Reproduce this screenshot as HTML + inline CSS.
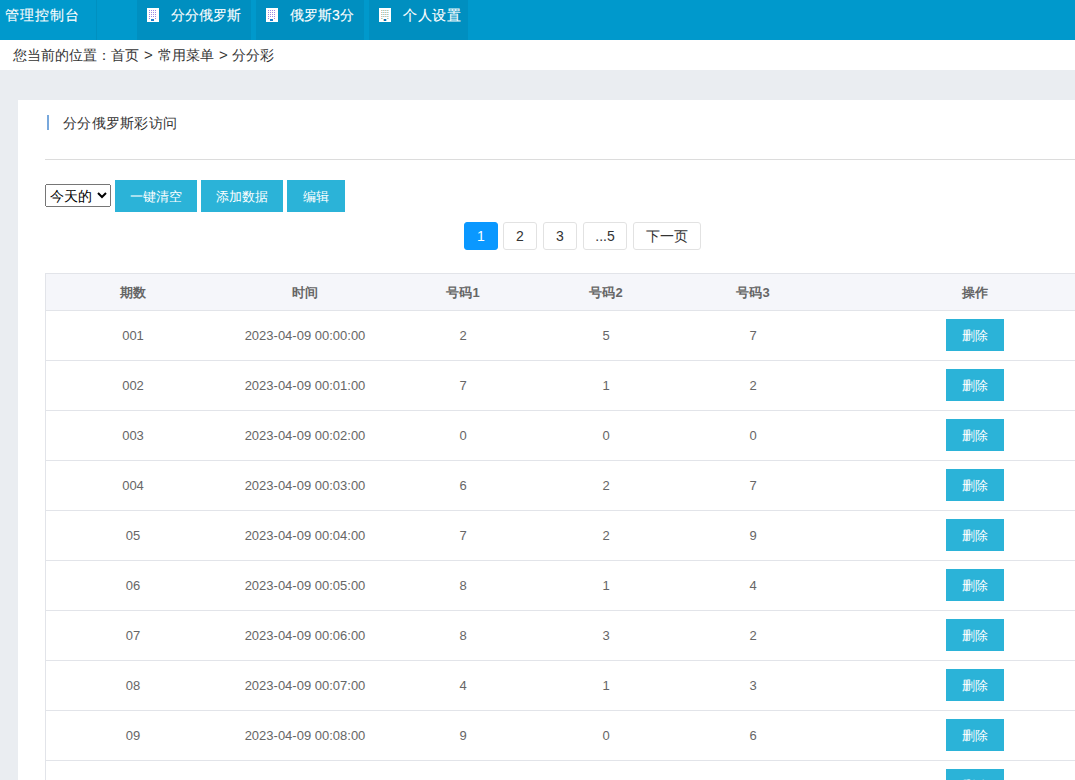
<!DOCTYPE html>
<html>
<head>
<meta charset="utf-8">
<style>
*{box-sizing:border-box;}
html,body{margin:0;padding:0;}
body{width:1075px;height:780px;overflow:hidden;position:relative;background:#eaedf1;font-family:"Liberation Sans",sans-serif;color:#333;}
.hdr{position:absolute;left:0;top:0;width:1075px;height:40px;background:#0099cc;}
.logo{position:absolute;left:5px;top:0;height:40px;line-height:30px;font-size:14px;letter-spacing:1px;color:#fff;-webkit-text-stroke:0.1px #fff;}
.vline{position:absolute;left:96px;top:0;width:1px;height:40px;background:#0090c0;}
.tab{position:absolute;top:0;height:40px;background:#008fc0;color:#fff;font-size:14px;line-height:30px;}
.tab .ic{position:absolute;left:10px;top:8px;width:12px;height:14px;display:block;}
.tab .tx{position:absolute;left:34px;top:0;white-space:nowrap;-webkit-text-stroke:0.1px #fff;}
.crumb{position:absolute;left:0;top:40px;width:1075px;height:30px;background:#fff;font-size:14px;line-height:30px;color:#333;}
.crumb .t{position:absolute;left:13px;top:0;white-space:nowrap;}
.crumb .gt{font-size:15px;}
.panel{position:absolute;left:18px;top:100px;width:1100px;height:700px;background:#fff;}
.qbar{position:absolute;left:47px;top:115px;width:2px;height:15px;background:#78a8dc;}
.qtitle{position:absolute;left:63px;top:112px;font-size:14px;line-height:22px;letter-spacing:0.25px;color:#333;white-space:nowrap;}
.hr{position:absolute;left:45px;top:159px;width:1040px;height:1px;background:#dcdcdc;}
select{position:absolute;left:45px;top:184px;width:66px;height:23px;font-size:14px;}
.btn{position:absolute;top:180px;height:32px;background:#2bb3d8;color:#fff;font-size:13px;line-height:34px;text-align:center;}
.pg{position:absolute;top:222px;height:28px;border:1px solid #e2e2e2;border-radius:3px;background:#fff;color:#333;font-size:14px;line-height:26px;text-align:center;}
.pg.on{background:#0a98ff;border-color:#0a98ff;color:#fff;}
.tbl{position:absolute;left:45px;top:273px;width:1060px;border-left:1px solid #e2e4e9;border-top:1px solid #e2e4e9;}
.row{position:relative;height:50px;border-bottom:1px solid #e2e4e9;font-size:13px;color:#666;}
.row.h{height:37px;background:#f5f6fa;font-weight:bold;}
.c{position:absolute;top:0;white-space:nowrap;transform:translateX(-50%);}
.row .c{line-height:49px;}
.row.h .c{line-height:36px;top:1px;}
.c1{left:87px}.c2{left:259px}.c3{left:417px}.c4{left:560px}.c5{left:707px}.c6{left:929px}
.del{position:absolute;left:900px;top:8px;width:58px;height:32px;background:#2bb3d8;color:#fff;font-size:12px;line-height:34px;text-align:center;font-weight:normal;font-size:13px;}
</style>
</head>
<body>
<div class="hdr">
  <div class="logo">管理控制台</div>
  <div class="vline"></div>
  <div class="tab" style="left:137px;width:114px"><svg class="ic" width="12" height="14" viewBox="0 0 12 14" shape-rendering="crispEdges"><rect width="12" height="14" fill="#fff"/><rect x="2" y="2" width="1" height="1" fill="#9d8ce6"/><rect x="4" y="2" width="1" height="1" fill="#9d8ce6"/><rect x="6" y="2" width="1" height="1" fill="#9d8ce6"/><rect x="8" y="2" width="1" height="1" fill="#9d8ce6"/><rect x="2" y="4" width="1" height="1" fill="#9d8ce6"/><rect x="4" y="4" width="1" height="1" fill="#9d8ce6"/><rect x="6" y="4" width="1" height="1" fill="#9d8ce6"/><rect x="8" y="4" width="1" height="1" fill="#9d8ce6"/><rect x="2" y="6" width="1" height="1" fill="#9d8ce6"/><rect x="4" y="6" width="1" height="1" fill="#9d8ce6"/><rect x="6" y="6" width="1" height="1" fill="#9d8ce6"/><rect x="8" y="6" width="1" height="1" fill="#9d8ce6"/><rect x="2" y="8" width="1" height="1" fill="#9d8ce6"/><rect x="4" y="8" width="1" height="1" fill="#9d8ce6"/><rect x="6" y="8" width="1" height="1" fill="#9d8ce6"/><rect x="8" y="8" width="1" height="1" fill="#9d8ce6"/><rect x="2" y="10" width="1" height="1" fill="#9d8ce6"/><rect x="8" y="10" width="1" height="1" fill="#9d8ce6"/><rect x="4" y="11" width="3" height="2" fill="#1f7fd0"/></svg><span class="tx">分分俄罗斯</span></div>
  <div class="tab" style="left:256px;width:108px"><svg class="ic" width="12" height="14" viewBox="0 0 12 14" shape-rendering="crispEdges"><rect width="12" height="14" fill="#fff"/><rect x="2" y="2" width="1" height="1" fill="#9d8ce6"/><rect x="4" y="2" width="1" height="1" fill="#9d8ce6"/><rect x="6" y="2" width="1" height="1" fill="#9d8ce6"/><rect x="8" y="2" width="1" height="1" fill="#9d8ce6"/><rect x="2" y="4" width="1" height="1" fill="#9d8ce6"/><rect x="4" y="4" width="1" height="1" fill="#9d8ce6"/><rect x="6" y="4" width="1" height="1" fill="#9d8ce6"/><rect x="8" y="4" width="1" height="1" fill="#9d8ce6"/><rect x="2" y="6" width="1" height="1" fill="#9d8ce6"/><rect x="4" y="6" width="1" height="1" fill="#9d8ce6"/><rect x="6" y="6" width="1" height="1" fill="#9d8ce6"/><rect x="8" y="6" width="1" height="1" fill="#9d8ce6"/><rect x="2" y="8" width="1" height="1" fill="#9d8ce6"/><rect x="4" y="8" width="1" height="1" fill="#9d8ce6"/><rect x="6" y="8" width="1" height="1" fill="#9d8ce6"/><rect x="8" y="8" width="1" height="1" fill="#9d8ce6"/><rect x="2" y="10" width="1" height="1" fill="#9d8ce6"/><rect x="8" y="10" width="1" height="1" fill="#9d8ce6"/><rect x="4" y="11" width="3" height="2" fill="#1f7fd0"/></svg><span class="tx">俄罗斯3分</span></div>
  <div class="tab" style="left:369px;width:99px"><svg class="ic" width="12" height="14" viewBox="0 0 12 14" shape-rendering="crispEdges"><rect width="12" height="14" fill="#fff"/><rect x="2" y="2" width="1" height="1" fill="#d2c0a0"/><rect x="3" y="2" width="1" height="1" fill="#b0eaf4"/><rect x="4" y="2" width="1" height="1" fill="#d2c0a0"/><rect x="5" y="2" width="1" height="1" fill="#b0eaf4"/><rect x="6" y="2" width="1" height="1" fill="#d2c0a0"/><rect x="7" y="2" width="1" height="1" fill="#b0eaf4"/><rect x="8" y="2" width="1" height="1" fill="#d2c0a0"/><rect x="9" y="2" width="1" height="1" fill="#b0eaf4"/><rect x="2" y="4" width="1" height="1" fill="#d2c0a0"/><rect x="3" y="4" width="1" height="1" fill="#b0eaf4"/><rect x="4" y="4" width="1" height="1" fill="#d2c0a0"/><rect x="5" y="4" width="1" height="1" fill="#b0eaf4"/><rect x="6" y="4" width="1" height="1" fill="#d2c0a0"/><rect x="7" y="4" width="1" height="1" fill="#b0eaf4"/><rect x="8" y="4" width="1" height="1" fill="#d2c0a0"/><rect x="9" y="4" width="1" height="1" fill="#b0eaf4"/><rect x="2" y="6" width="1" height="1" fill="#d2c0a0"/><rect x="3" y="6" width="1" height="1" fill="#b0eaf4"/><rect x="4" y="6" width="1" height="1" fill="#d2c0a0"/><rect x="5" y="6" width="1" height="1" fill="#b0eaf4"/><rect x="6" y="6" width="1" height="1" fill="#d2c0a0"/><rect x="7" y="6" width="1" height="1" fill="#b0eaf4"/><rect x="8" y="6" width="1" height="1" fill="#d2c0a0"/><rect x="9" y="6" width="1" height="1" fill="#b0eaf4"/><rect x="2" y="8" width="1" height="1" fill="#d2c0a0"/><rect x="3" y="8" width="1" height="1" fill="#b0eaf4"/><rect x="4" y="8" width="1" height="1" fill="#d2c0a0"/><rect x="5" y="8" width="1" height="1" fill="#b0eaf4"/><rect x="6" y="8" width="1" height="1" fill="#d2c0a0"/><rect x="7" y="8" width="1" height="1" fill="#b0eaf4"/><rect x="8" y="8" width="1" height="1" fill="#d2c0a0"/><rect x="9" y="8" width="1" height="1" fill="#b0eaf4"/><rect x="2" y="10" width="1" height="1" fill="#d2c0a0"/><rect x="3" y="10" width="1" height="1" fill="#b0eaf4"/><rect x="8" y="10" width="1" height="1" fill="#d2c0a0"/><rect x="9" y="10" width="1" height="1" fill="#b0eaf4"/><rect x="5" y="11" width="2" height="2" fill="#0a6fb8"/><rect x="4" y="11" width="1" height="2" fill="#e6d2a8"/><rect x="7" y="11" width="1" height="2" fill="#9fe2f2"/></svg><span class="tx" style="letter-spacing:0.6px">个人设置</span></div>
</div>
<div class="crumb"><span class="t" style="left:13px">您当前的位置：首页</span><span class="t gt" style="left:144px">&gt;</span><span class="t" style="left:158px">常用菜单</span><span class="t gt" style="left:219px">&gt;</span><span class="t" style="left:232px">分分彩</span></div>
<div class="panel"></div>
<div class="qbar"></div>
<div class="qtitle">分分俄罗斯彩访问</div>
<div class="hr"></div>
<select><option>今天的</option></select>
<div class="btn" style="left:115px;width:82px">一键清空</div>
<div class="btn" style="left:201px;width:82px">添加数据</div>
<div class="btn" style="left:287px;width:58px">编辑</div>
<div class="pg on" style="left:464px;width:34px">1</div>
<div class="pg" style="left:503px;width:34px">2</div>
<div class="pg" style="left:543px;width:34px">3</div>
<div class="pg" style="left:583px;width:44px">...5</div>
<div class="pg" style="left:633px;width:68px">下一页</div>
<div class="tbl" id="tbl">
  <div class="row h"><span class="c c1">期数</span><span class="c c2">时间</span><span class="c c3">号码1</span><span class="c c4">号码2</span><span class="c c5">号码3</span><span class="c c6">操作</span></div>
  <div class="row"><span class="c c1">001</span><span class="c c2">2023-04-09 00:00:00</span><span class="c c3">2</span><span class="c c4">5</span><span class="c c5">7</span><div class="del">删除</div></div>
  <div class="row"><span class="c c1">002</span><span class="c c2">2023-04-09 00:01:00</span><span class="c c3">7</span><span class="c c4">1</span><span class="c c5">2</span><div class="del">删除</div></div>
  <div class="row"><span class="c c1">003</span><span class="c c2">2023-04-09 00:02:00</span><span class="c c3">0</span><span class="c c4">0</span><span class="c c5">0</span><div class="del">删除</div></div>
  <div class="row"><span class="c c1">004</span><span class="c c2">2023-04-09 00:03:00</span><span class="c c3">6</span><span class="c c4">2</span><span class="c c5">7</span><div class="del">删除</div></div>
  <div class="row"><span class="c c1">05</span><span class="c c2">2023-04-09 00:04:00</span><span class="c c3">7</span><span class="c c4">2</span><span class="c c5">9</span><div class="del">删除</div></div>
  <div class="row"><span class="c c1">06</span><span class="c c2">2023-04-09 00:05:00</span><span class="c c3">8</span><span class="c c4">1</span><span class="c c5">4</span><div class="del">删除</div></div>
  <div class="row"><span class="c c1">07</span><span class="c c2">2023-04-09 00:06:00</span><span class="c c3">8</span><span class="c c4">3</span><span class="c c5">2</span><div class="del">删除</div></div>
  <div class="row"><span class="c c1">08</span><span class="c c2">2023-04-09 00:07:00</span><span class="c c3">4</span><span class="c c4">1</span><span class="c c5">3</span><div class="del">删除</div></div>
  <div class="row"><span class="c c1">09</span><span class="c c2">2023-04-09 00:08:00</span><span class="c c3">9</span><span class="c c4">0</span><span class="c c5">6</span><div class="del">删除</div></div>
  <div class="row"><span class="c c1">10</span><span class="c c2">2023-04-09 00:09:00</span><span class="c c3">1</span><span class="c c4">2</span><span class="c c5">3</span><div class="del">删除</div></div>
</div>

</body>
</html>
